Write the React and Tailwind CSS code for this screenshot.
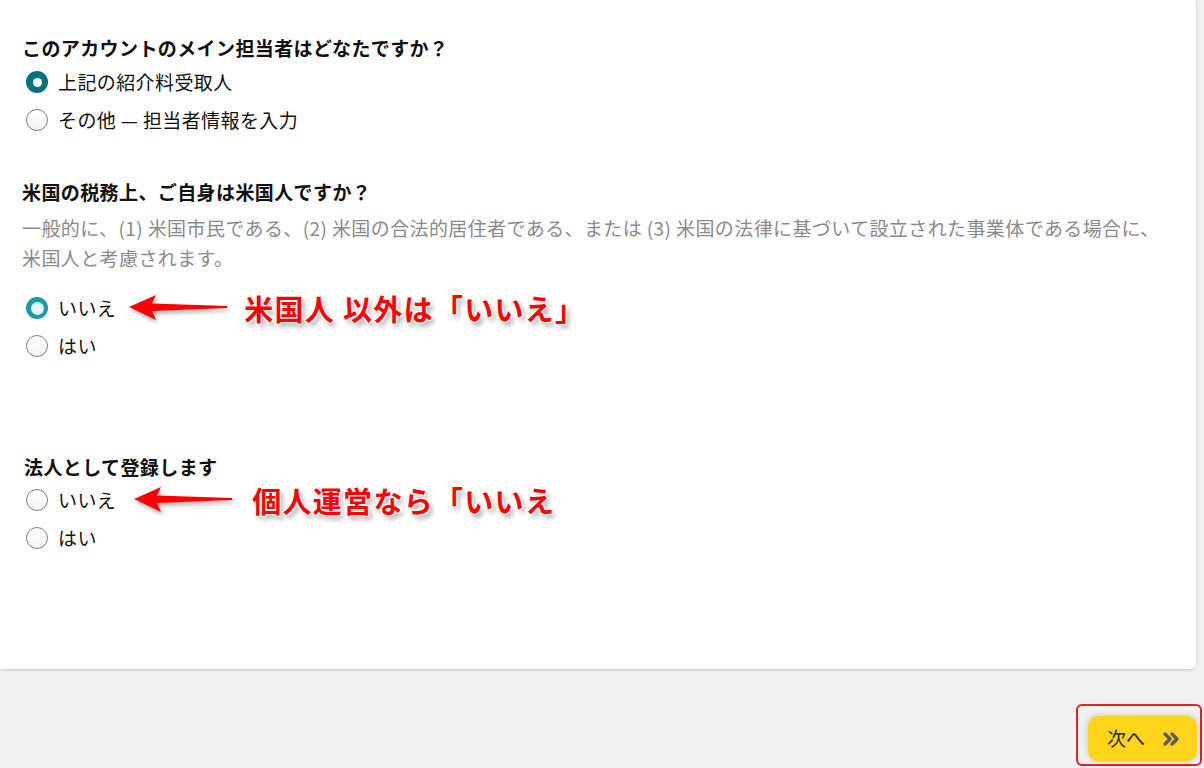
import { ChevronsRight } from "lucide-react";

const font = { fontFamily: '"Noto Sans CJK JP", "Noto Sans", sans-serif' };

function Radio({ state = "off" }) {
  if (state === "on") {
    return (
      <span className="ml-[4px] flex h-[22px] w-[22px] shrink-0 items-center justify-center rounded-full bg-[#00727f]">
        <span className="h-[9px] w-[9px] rounded-full bg-white" />
      </span>
    );
  }
  if (state === "focus") {
    return (
      <span className="ml-[4px] flex h-[22px] w-[22px] shrink-0 items-center justify-center rounded-full bg-[#1b9aa8]">
        <span className="h-[13px] w-[13px] rounded-full bg-[#e9f6f8]" />
      </span>
    );
  }
  return (
    <span className="ml-[4px] h-[22px] w-[22px] shrink-0 rounded-full border-[1.5px] border-[#7f7f7f] bg-gradient-to-b from-white to-[#f3f3f3]" />
  );
}

function Arrow({ className = "" }) {
  return (
    <svg
      width="100"
      height="28"
      viewBox="0 0 100 28"
      className={`shrink-0 [filter:drop-shadow(2px_3px_2px_rgba(0,0,0,0.3))] ${className}`}
    >
      <polygon
        points="0,13 27,1 23,9.5 98,12 98,14 23,17 27,26"
        fill="#ff0000"
      />
    </svg>
  );
}

function Note({ children, className = "" }) {
  return (
    <span
      className={`whitespace-nowrap text-[29px] font-bold leading-none tracking-[1.3px] text-[#ff0000] [text-shadow:1px_1px_0_#fff,-1px_-1px_0_#fff,1px_-1px_0_#fff,-1px_1px_0_#fff,0_0_3px_#fff,3px_4px_5px_rgba(0,0,0,0.35)] ${className}`}
    >
      {children}
    </span>
  );
}

function Row({ state, label, children }) {
  return (
    <div className="flex h-[38px] items-center">
      <Radio state={state} />
      <span className="ml-[10px] text-[19px] tracking-[0.4px] text-[#111]">{label}</span>
      {children}
    </div>
  );
}

export default function App() {
  return (
    <div className="min-h-[768px] bg-[#f1f1f1]" style={font}>
      <div className="mr-[8px] h-[669px] rounded-br-[5px] bg-white pl-[22px] pt-[33px] shadow-[0_1px_3px_rgba(0,0,0,0.18)]">
        <h2 className="text-[19px] font-bold leading-[30px] tracking-[0.4px] text-[#111]">
          このアカウントのメイン担当者はどなたですか？
        </h2>
        <Row state="on" label="上記の紹介料受取人" />
        <Row label="その他 — 担当者情報を入力" />

        <h2 className="mt-[38px] text-[19px] font-bold leading-[30px] tracking-[0.4px] text-[#111]">
          米国の税務上、ご自身は米国人ですか？
        </h2>
        <p className="mt-[6px] pr-[30px] text-[19px] leading-[30px] tracking-[0.4px] text-[#8a8a8a]">
          一般的に、(1) 米国市民である、(2) 米国の合法的居住者である、または (3) 米国の法律に基づいて設立された事業体である場合に、米国人と考慮されます。
        </p>
        <div className="mt-[16px]">
          <Row state="focus" label="いいえ">
            <Arrow className="ml-[13px]" />
            <Note className="ml-[15px]">米国人 以外は「いいえ」</Note>
          </Row>
          <Row label="はい" />
        </div>

        <h2 className="mt-[87px] pl-[2px] text-[19px] font-bold leading-[29px] tracking-[0.4px] text-[#111]">
          法人として登録します
        </h2>
        <Row label="いいえ">
          <Arrow className="ml-[18px]" />
          <Note className="ml-[18px]">個人運営なら「いいえ</Note>
        </Row>
        <Row label="はい" />
      </div>

      <div className="flex justify-end pr-[2px] pt-[35px]">
        <div className="rounded-[6px] border-2 border-[#e3202b] pb-[3px] pl-[10px] pr-[3px] pt-[10px]">
          <button className="flex h-[45px] w-[109px] items-center rounded-[10px] bg-[#fed51a] pl-[19px] shadow-[0_0_6px_rgba(0,0,0,0.2)]">
            <span className="text-[19px] text-[#222]">次へ</span>
            <ChevronsRight
              size={24}
              strokeWidth={3.4}
              className="ml-[14px] text-[#5a5a5a]"
            />
          </button>
        </div>
      </div>
    </div>
  );
}
